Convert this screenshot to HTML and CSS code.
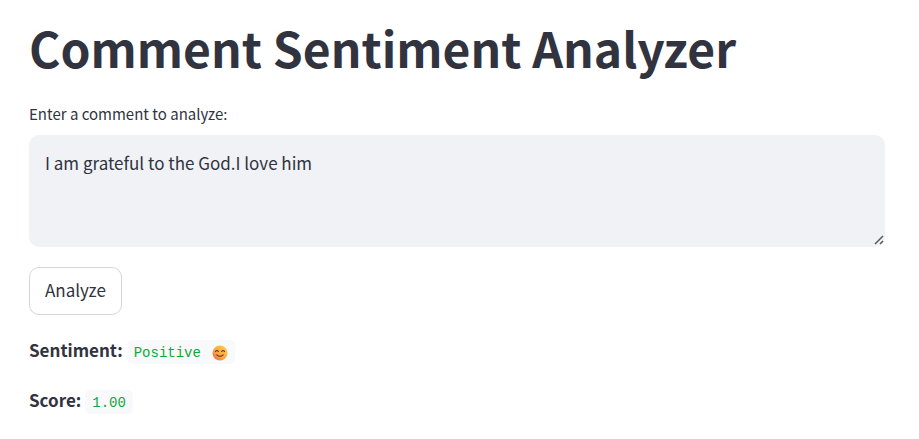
FILE: index.html
```html
<!DOCTYPE html>
<html lang="en">
<head>
<meta charset="utf-8">
<title>Comment Sentiment Analyzer</title>
<link rel="stylesheet" href="styles.css">
</head>
<body>
<main class="page">
  <h1 class="title">Comment Sentiment Analyzer</h1>
  <label class="label" for="comment">Enter a comment to analyze:</label>
  <div class="field">
    <textarea class="input" id="comment">I am grateful to the God.I love him</textarea>
    <svg class="grip" viewBox="0 0 10 10" aria-hidden="true"><path d="M1 9 9 1M6 9l3-3"/></svg>
  </div>
  <button class="button" type="button">Analyze</button>
  <p class="result"><strong>Sentiment:</strong> <code class="code">Positive <svg class="emoji" viewBox="0 0 16 16" role="img" aria-label="Smiling face">
    <defs><linearGradient id="face" x1="1" y1="0" x2="0" y2="1"><stop offset="0" stop-color="#ffd047"/><stop offset=".6" stop-color="#fba43c"/><stop offset="1" stop-color="#ee5a62"/></linearGradient></defs>
    <circle cx="8" cy="8" r="7.5" fill="url(#face)"/>
    <g fill="none" stroke="#5b3138" stroke-width="1.1" stroke-linecap="round"><path d="M3.500 6.500Q4.900 4.400 6.300 6.500M9.700 6.500Q11.100 4.400 12.500 6.500M4.800 9.800Q8 12.600 11.200 9.800"/></g>
  </svg></code></p>
  <p class="result"><strong>Score:</strong> <code class="code">1.00</code></p>
</main>
</body>
</html>
```
FILE: styles.css
```css
* {
  box-sizing: border-box;
}

body {
  margin: 0;
  background: #fff;
  color: #31333f;
  font-family: "Noto Sans CJK SC", "Noto Sans", sans-serif;
  font-size: 17px;
  line-height: 30px;
}

.page {
  display: flex;
  flex-direction: column;
  align-items: flex-start;
  padding: 15px 34px 20px 29px;
}

.title {
  margin: 0 0 22px;
  font-size: 48px;
  font-weight: 700;
  line-height: 64px;
}

.label {
  margin-bottom: 9px;
  font-size: 15px;
  line-height: 25px;
}

.field {
  position: relative;
  width: 100%;
  margin-bottom: 20px;
}

.input {
  display: block;
  width: 100%;
  height: 112px;
  padding: 13px 16px;
  border: 0;
  border-radius: 10px;
  outline: 0;
  background: #f0f2f6;
  color: inherit;
  font: inherit;
  resize: none;
}

.grip {
  position: absolute;
  right: 1px;
  bottom: 2px;
  width: 10px;
  height: 10px;
  fill: none;
  stroke: #55565c;
  stroke-width: 1.5;
}

.button {
  height: 48px;
  margin-bottom: 20px;
  padding: 0 15px 2px;
  border: 1px solid #d6d6d9;
  border-radius: 10px;
  background: #fff;
  color: inherit;
  font: inherit;
}

.result {
  display: flex;
  align-items: flex-end;
  gap: 4px;
  margin: 0 0 20px;
}

.result strong {
  font-weight: 600;
}

.code {
  display: flex;
  align-items: center;
  gap: 11px;
  height: 24px;
  margin-bottom: 1px;
  padding: 1px 7px 0;
  border-radius: 5px;
  background: #f8f9fb;
  color: #09ab3b;
  font-family: "Liberation Mono", monospace;
  font-size: 14px;
}

.emoji {
  width: 16px;
  height: 16px;
}
```
